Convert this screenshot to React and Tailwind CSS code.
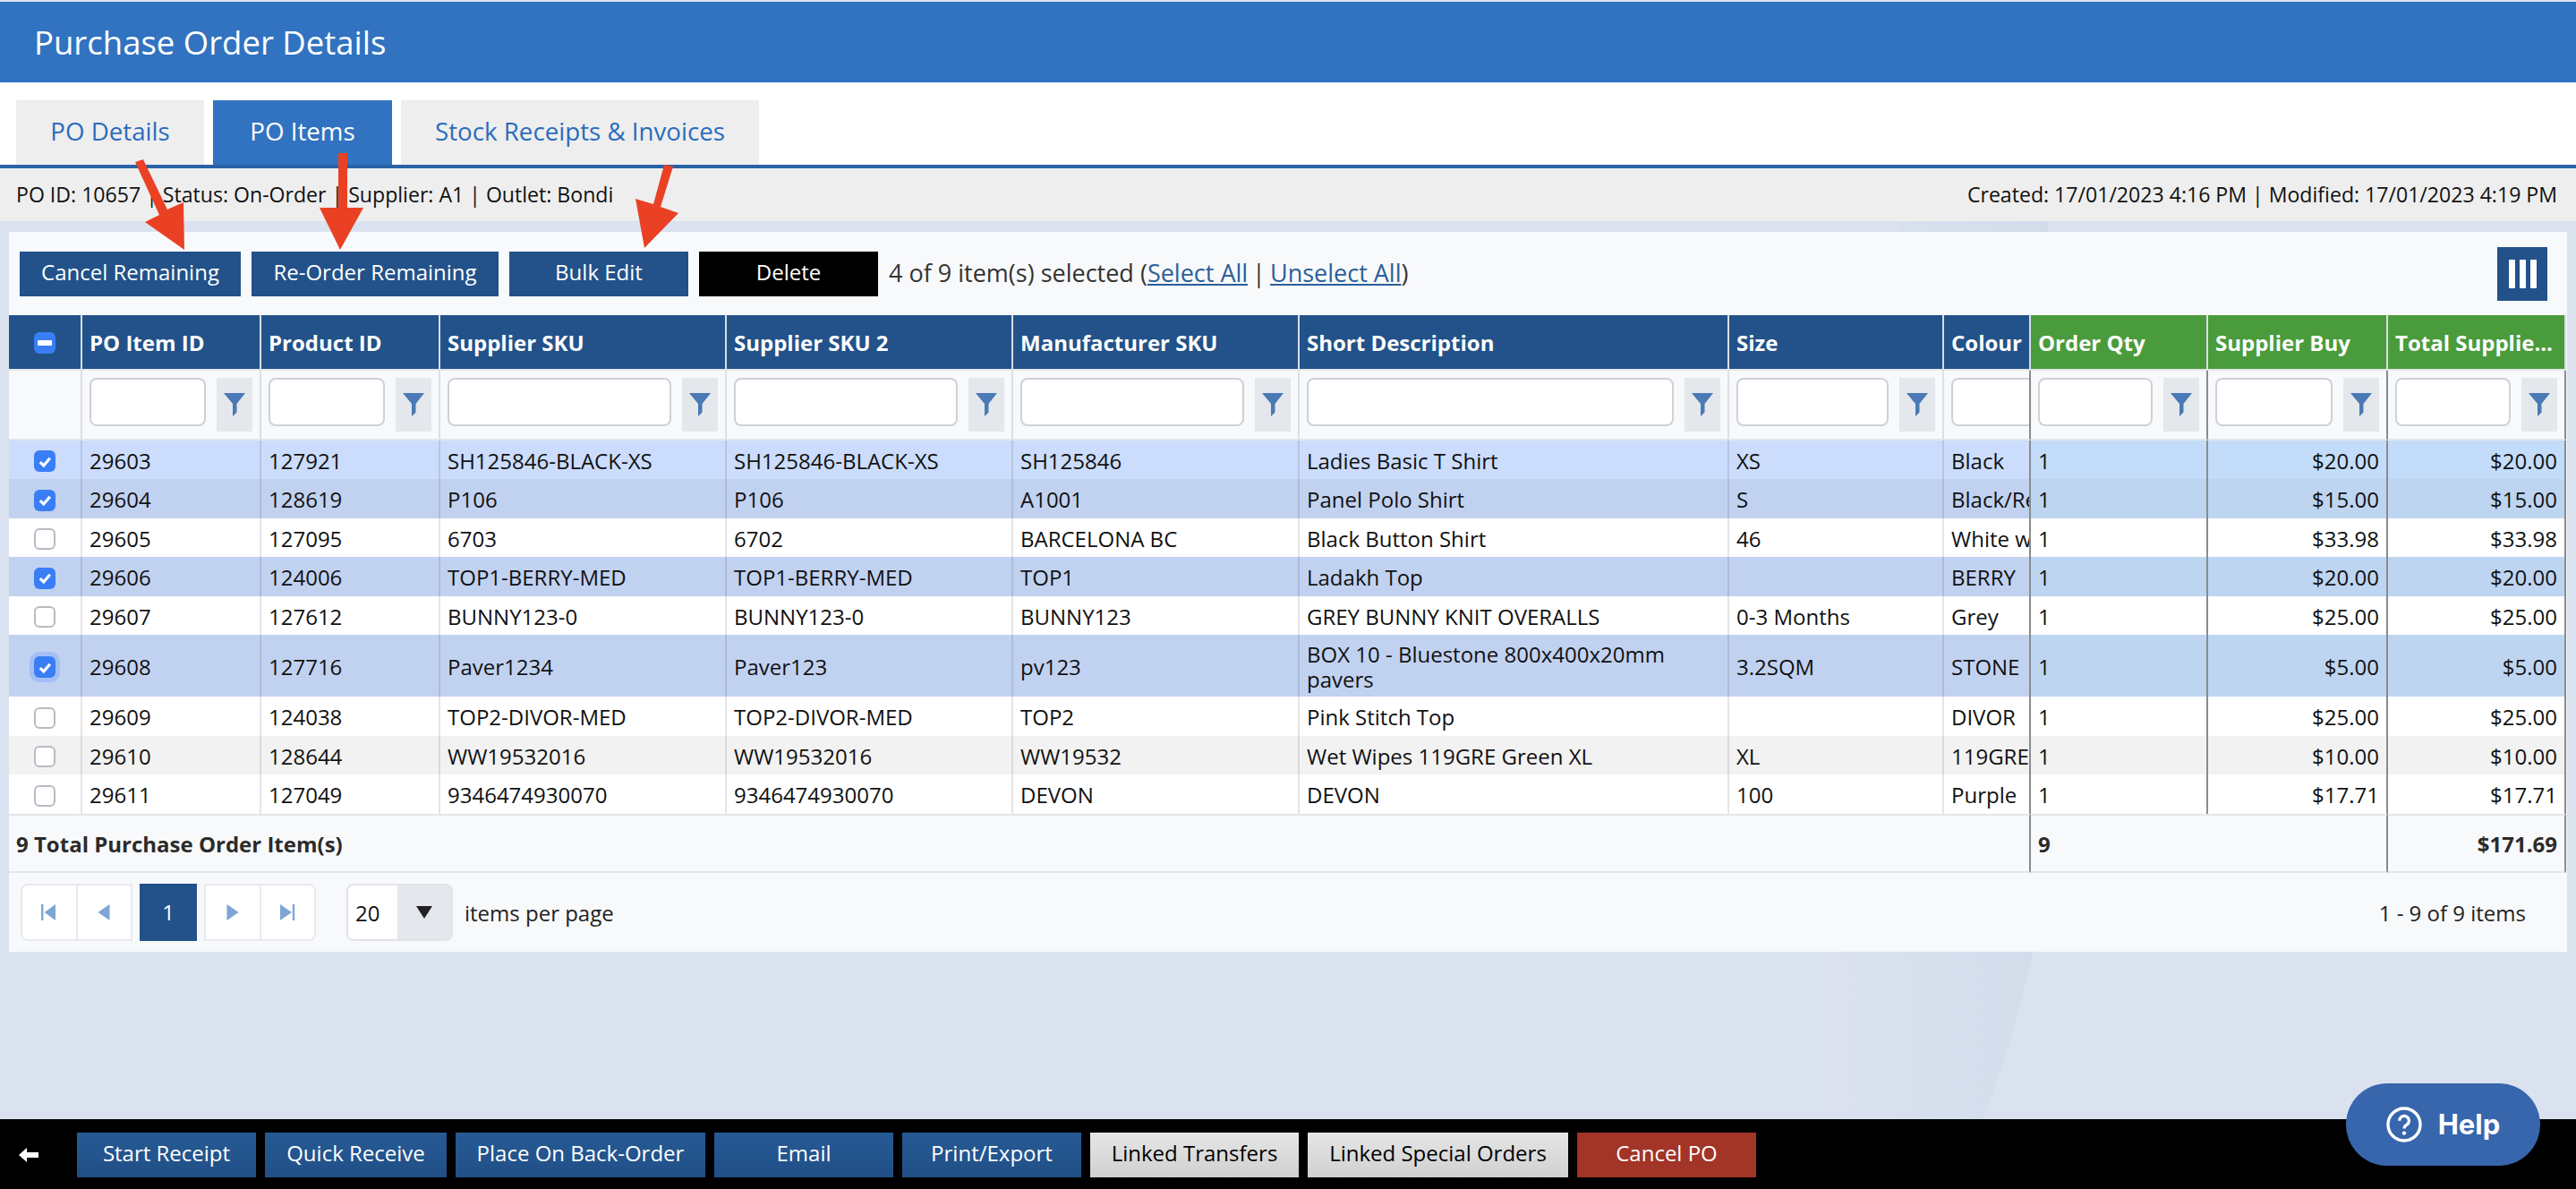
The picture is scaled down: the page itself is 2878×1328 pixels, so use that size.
const FONT = "font-['Open_Sans','Noto_Sans',sans-serif]";

const SEL = "bg-[#c1d2f1]";
const SEL_LOCK = "bg-[#bed5f2]";

const rows = [
  { on: true, h: "h-[43px]", bg: "bg-[#cbdcfc]", lock: "bg-[#c3dcfa]", c: ["29603", "127921", "SH125846-BLACK-XS", "SH125846-BLACK-XS", "SH125846", "Ladies Basic T Shirt", "XS", "Black"], buy: "$20.00", total: "$20.00" },
  { on: true, h: "h-[44px]", bg: SEL, lock: SEL_LOCK, c: ["29604", "128619", "P106", "P106", "A1001", "Panel Polo Shirt", "S", "Black/Red"], buy: "$15.00", total: "$15.00" },
  { on: false, h: "h-[43px]", bg: "bg-white", lock: "bg-white", c: ["29605", "127095", "6703", "6702", "BARCELONA BC", "Black Button Shirt", "46", "White with"], buy: "$33.98", total: "$33.98" },
  { on: true, h: "h-[44px]", bg: SEL, lock: SEL_LOCK, c: ["29606", "124006", "TOP1-BERRY-MED", "TOP1-BERRY-MED", "TOP1", "Ladakh Top", "", "BERRY"], buy: "$20.00", total: "$20.00" },
  { on: false, h: "h-[43px]", bg: "bg-white", lock: "bg-white", c: ["29607", "127612", "BUNNY123-0", "BUNNY123-0", "BUNNY123", "GREY BUNNY KNIT OVERALLS", "0-3 Months", "Grey"], buy: "$25.00", total: "$25.00" },
  { on: true, focus: true, h: "h-[69px]", bg: SEL, lock: SEL_LOCK, c: ["29608", "127716", "Paver1234", "Paver123", "pv123", "BOX 10 - Bluestone 800x400x20mm pavers", "3.2SQM", "STONE"], buy: "$5.00", total: "$5.00" },
  { on: false, h: "h-[44px]", bg: "bg-white", lock: "bg-white", c: ["29609", "124038", "TOP2-DIVOR-MED", "TOP2-DIVOR-MED", "TOP2", "Pink Stitch Top", "", "DIVOR"], buy: "$25.00", total: "$25.00" },
  { on: false, h: "h-[43px]", bg: "bg-[#f2f2f2]", lock: "bg-[#f2f2f2]", c: ["29610", "128644", "WW19532016", "WW19532016", "WW19532", "Wet Wipes 119GRE Green XL", "XL", "119GREEN"], buy: "$10.00", total: "$10.00" },
  { on: false, h: "h-[44px]", bg: "bg-white", lock: "bg-white", c: ["29611", "127049", "9346474930070", "9346474930070", "DEVON", "DEVON", "100", "Purple"], buy: "$17.71", total: "$17.71" },
];

const headers = ["PO Item ID", "Product ID", "Supplier SKU", "Supplier SKU 2", "Manufacturer SKU", "Short Description", "Size", "Colour"];
const greenHeaders = ["Order Qty", "Supplier Buy", "Total Supplie..."];

const Check = ({ on, focus }) => (
  <span
    className={`flex h-6 w-6 items-center justify-center rounded-[6px] ${
      on ? "bg-[#3a7ef6]" : "border-2 border-[#b7bcc4] bg-white"
    } ${focus ? "ring-[5px] ring-[#a3bff5]" : ""}`}
  >
    {on && (
      <svg viewBox="0 0 16 16" className="h-[17px] w-[17px]">
        <path d="M2.6 8.6 6.4 12.2 13 4.4" fill="none" stroke="white" strokeWidth="3" />
      </svg>
    )}
  </span>
);

const Funnel = () => (
  <svg viewBox="0 0 24 26" className="h-[26px] w-6">
    <path d="M0 0h24L14.5 12v9.5L10 26V12z" fill="#4a7ab5" />
  </svg>
);

const FilterCell = ({ dark }) => (
  <td className={`border-b-2 border-b-[#e3e6ea] border-r-2 px-2 align-top pt-2 ${dark ? "border-r-[#888c91]" : "border-r-[#dcdfe4]"}`}>
    <div className="flex items-start gap-3">
      <div className="h-[54px] min-w-0 flex-1 rounded-lg border-2 border-[#ced1d6] bg-white" />
      <button className="flex h-[60px] w-10 shrink-0 items-center justify-center bg-[#e4e7ec]">
        <Funnel />
      </button>
    </div>
  </td>
);

const PagerIcon = ({ d }) => (
  <span className="flex flex-1 items-center justify-center">
    <svg viewBox="0 0 18 18" className="h-[18px] w-[18px]">
      <path d={d} fill="#7ea5d4" />
    </svg>
  </span>
);

const BarBtn = ({ w, children, tone = "blue" }) => {
  const tones = {
    blue: "bg-gradient-to-b from-[#265a94] to-[#214f87] text-white",
    grey: "bg-gradient-to-b from-[#e6e6e6] to-[#d0d0d0] text-black",
    red: "bg-[#a23428] text-white",
  };
  return <button className={`h-[50px] pb-1 text-[24px] ${w} ${tones[tone]}`}>{children}</button>;
};

export default function App() {
  return (
    <div className={`relative flex h-[1328px] w-[2878px] flex-col overflow-hidden bg-[#dbe2ef] text-[24px] text-[#222] ${FONT}`}>
      {/* faint swoosh of the page background */}
      <svg className="absolute left-0 top-0" width="2878" height="1328" viewBox="0 0 2878 1328">
        <defs>
          <linearGradient id="swoosh" gradientUnits="userSpaceOnUse" x1="2290" y1="0" x2="2040" y2="0">
            <stop offset="0" stopColor="#d1dceb" />
            <stop offset="1" stopColor="#dbe2ef" />
          </linearGradient>
        </defs>
        <path d="M2287 247C2330 600 2330 950 2216 1250H1990C2100 950 2180 600 2120 247z" fill="url(#swoosh)" />
      </svg>

      <div className="relative mt-[2px] flex h-[90px] items-center bg-[#3173c0] pl-[38px] text-[36.5px] text-white">
        Purchase Order Details
      </div>

      <div className="relative flex h-[96px] items-end gap-[10px] border-b-4 border-[#2a62a6] bg-white pl-[18px]">
        <button className="h-[72px] w-[210px] bg-[#eeeeee] pb-[2px] text-[27.7px] text-[#2a6cbd]">PO Details</button>
        <button className="h-[72px] w-[200px] bg-[#3173c0] pb-[2px] text-[27.7px] text-white">PO Items</button>
        <button className="h-[72px] w-[400px] bg-[#eeeeee] pb-[2px] text-[27.7px] text-[#2a6cbd]">Stock Receipts &amp; Invoices</button>
      </div>

      <div className="relative flex h-[59px] items-center justify-between bg-[#eeeeee] pl-[18px] pr-[21px] text-[23.1px] text-[#111]">
        <span>PO ID: 10657 | Status: On-Order | Supplier: A1 | Outlet: Bondi</span>
        <span>Created: 17/01/2023 4:16 PM | Modified: 17/01/2023 4:19 PM</span>
      </div>

      <div className="relative mx-[10px] mt-3 h-[804px] bg-[#f8f9fb]">
        <div className="flex h-[93px] items-center pl-3 pr-[22px]">
          <button className="h-[50px] w-[247px] bg-[#225289] pb-1 text-white">Cancel Remaining</button>
          <button className="ml-3 h-[50px] w-[276px] bg-[#225289] pb-1 text-white">Re-Order Remaining</button>
          <button className="ml-3 h-[50px] w-[200px] bg-[#225289] pb-1 text-white">Bulk Edit</button>
          <button className="ml-3 h-[50px] w-[200px] bg-black pb-1 text-white">Delete</button>
          <span className="ml-3 text-[27px] text-[#333]">
            4 of 9 item(s) selected (<a className="text-[#2a6099] underline">Select All</a>
            <span className="mx-[-2px]"> | </span>
            <a className="text-[#2a6099] underline">Unselect All</a>)
          </span>
          <button className="ml-auto flex h-[60px] w-14 items-center justify-center gap-[5px] bg-[#225289]">
            <span className="h-8 w-[7px] bg-white" />
            <span className="h-8 w-[7px] bg-white" />
            <span className="h-8 w-[7px] bg-white" />
          </button>
        </div>

        <table className="w-[2857px] table-fixed border-separate border-spacing-0">
          <colgroup>
            <col className="w-[82px]" />
            <col className="w-[200px]" />
            <col className="w-[200px]" />
            <col className="w-[320px]" />
            <col className="w-[320px]" />
            <col className="w-[320px]" />
            <col className="w-[480px]" />
            <col className="w-[240px]" />
            <col className="w-[97px]" />
            <col className="w-[198px]" />
            <col className="w-[201px]" />
            <col className="w-[199px]" />
          </colgroup>
          <thead>
            <tr className="text-left text-white">
              <th className="h-[62px] border-b-2 border-r-2 border-b-[#e3e6ea] border-r-[#d8dde5] bg-[#225289] pt-[2px]">
                <span className="mx-auto flex h-6 w-6 items-center justify-center rounded-[6px] bg-[#3a7ef6]">
                  <span className="h-[6px] w-4 rounded-[1px] bg-white" />
                </span>
              </th>
              {headers.map((h) => (
                <th key={h} className="overflow-hidden whitespace-nowrap border-b-2 border-r-2 border-b-[#e3e6ea] border-r-[#d8dde5] bg-[#225289] px-2 pt-[2px] font-bold">
                  {h}
                </th>
              ))}
              {greenHeaders.map((h) => (
                <th key={h} className="overflow-hidden whitespace-nowrap border-b-2 border-r-2 border-b-[#e3e6ea] border-r-[#d8dde5] bg-[#4a9b3c] px-2 pt-[2px] font-bold">
                  {h}
                </th>
              ))}
            </tr>
          </thead>
          <tbody>
            <tr>
              <td className="h-[78px] border-b-2 border-r-2 border-b-[#e3e6ea] border-r-[#dcdfe4]" />
              {headers.slice(0, 7).map((h) => (
                <FilterCell key={h} />
              ))}
              <td className="overflow-hidden border-b-2 border-r-2 border-b-[#e3e6ea] border-r-[#888c91] pl-2 pt-2 align-top">
                <div className="h-[54px] w-[130px] rounded-lg border-2 border-[#ced1d6] bg-white" />
              </td>
              <FilterCell dark />
              <FilterCell dark />
              <FilterCell dark />
            </tr>
            {rows.map((r) => (
              <tr key={r.c[0]} className={`${r.bg} ${r.h}`}>
                <td className="border-r-2 border-black/10 pt-[3px]">
                  <div className="flex justify-center">
                    <Check on={r.on} focus={r.focus} />
                  </div>
                </td>
                {r.c.map((t, i) => (
                  <td
                    key={i}
                    className={`overflow-hidden border-r-2 px-2 pt-[2px] leading-[27.5px] text-[#111] ${
                      i === 7 ? "whitespace-nowrap border-[#888c91] pr-0" : "border-black/10"
                    } ${i === 5 ? "" : "whitespace-nowrap"}`}
                  >
                    {t}
                  </td>
                ))}
                <td className={`border-r-2 border-[#888c91] px-2 pt-[2px] leading-[27.5px] text-[#111] ${r.lock}`}>1</td>
                <td className={`border-r-2 border-[#888c91] px-2 pt-[2px] text-right leading-[27.5px] text-[#111] ${r.lock}`}>{r.buy}</td>
                <td className={`border-r-2 border-[#888c91] px-2 pt-[2px] text-right leading-[27.5px] text-[#111] ${r.lock}`}>{r.total}</td>
              </tr>
            ))}
            <tr className="font-bold text-[#2b2b2b]">
              <td colSpan={9} className="h-[66px] border-y-2 border-r-2 border-y-[#e3e6ea] border-r-[#888c91] px-2 pt-[2px]">
                9 Total Purchase Order Item(s)
              </td>
              <td colSpan={2} className="border-y-2 border-r-2 border-y-[#e3e6ea] border-r-[#888c91] px-2 pt-[2px]">9</td>
              <td className="border-y-2 border-r-2 border-y-[#e3e6ea] border-r-[#888c91] px-2 pt-[2px] text-right">$171.69</td>
            </tr>
          </tbody>
        </table>

        <div className="flex h-[88px] items-center pl-[13px] pr-[46px]">
          <div className="flex h-16 w-[125px] rounded-l-lg border-2 border-[#e6e9ee] bg-white">
            <PagerIcon d="M0 0h2.4v18H0zM16 0v18L3.6 9z" />
            <span className="border-l-2 border-[#e6e9ee]" />
            <PagerIcon d="M15.5 0v18L2.5 9z" />
          </div>
          <button className="mx-2 h-16 w-16 bg-[#225289] text-white">1</button>
          <div className="flex h-16 w-[125px] rounded-r-lg border-2 border-[#e6e9ee] bg-white">
            <PagerIcon d="M2.5 0v18l13-9z" />
            <span className="border-l-2 border-[#e6e9ee]" />
            <PagerIcon d="M1 0v18l13-9zM14.8 0h2.4v18h-2.4z" />
          </div>
          <div className="ml-[34px] flex h-16 w-[119px] overflow-hidden rounded-lg border-2 border-[#e0e3e8]">
            <span className="flex w-[55px] items-center bg-white pl-2 pt-[2px] text-[#111]">20</span>
            <span className="flex flex-1 items-center justify-center bg-[#e4e7ec]">
              <svg viewBox="0 0 18 14" className="h-[14px] w-[18px]">
                <path d="M0 0h18L9 14z" fill="#222" />
              </svg>
            </span>
          </div>
          <span className="ml-[13px] pt-[2px]">items per page</span>
          <span className="ml-auto pt-[2px]">1 - 9 of 9 items</span>
        </div>
      </div>

      <div className="relative mt-auto flex h-[78px] items-center gap-[10px] bg-black pl-[21px] pt-[2px]">
        <svg viewBox="0 0 22 16" className="mr-[33px] h-4 w-[22px]">
          <path d="M0 8 9 0v5h13v6H9v5z" fill="white" />
        </svg>
        <BarBtn w="w-[200px]">Start Receipt</BarBtn>
        <BarBtn w="w-[203px]">Quick Receive</BarBtn>
        <BarBtn w="w-[279px]">Place On Back-Order</BarBtn>
        <BarBtn w="w-[200px]">Email</BarBtn>
        <BarBtn w="w-[200px]">Print/Export</BarBtn>
        <BarBtn w="w-[233px]" tone="grey">Linked Transfers</BarBtn>
        <BarBtn w="w-[291px]" tone="grey">Linked Special Orders</BarBtn>
        <BarBtn w="w-[200px]" tone="red">Cancel PO</BarBtn>
      </div>

      {/* help bubble sits over the bottom bar */}
      <button className="absolute left-[2621px] top-[1210px] flex h-[92px] w-[217px] items-center justify-center gap-[18px] rounded-full bg-[#3866ad] font-['Inter',sans-serif] text-[31px] font-bold text-white">
        <svg viewBox="0 0 40 40" className="h-10 w-10">
          <circle cx="20" cy="20" r="18" fill="none" stroke="white" strokeWidth="3.4" />
          <path d="M14.8 15.8a5.3 5.3 0 1 1 8.2 4.4c-2 1.3-3 2-3 4.2" fill="none" stroke="white" strokeWidth="3.2" />
          <circle cx="20" cy="29.6" r="2.2" fill="white" />
        </svg>
        Help
      </button>

      {/* red annotation arrows */}
      <svg className="pointer-events-none absolute left-0 top-0" width="800" height="300" viewBox="0 0 800 300">
        <g fill="#ea4125">
          <path d="M151 181l9-3 27 56 18-8 1 53-44-31 16-8z" />
          <path d="M378 171h10v61h18l-26 47-23-47h21z" />
          <path d="M742 184l10 2-14 45 20 7-38 39-10-55 20 6z" />
        </g>
      </svg>
    </div>
  );
}
